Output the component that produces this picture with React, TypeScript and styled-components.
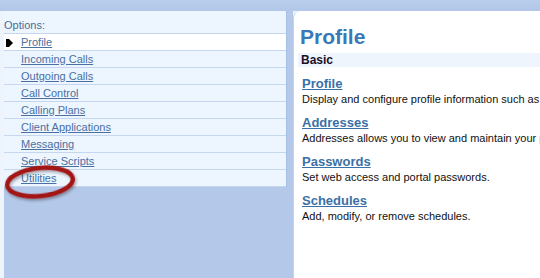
import React from "react";
import styled, { createGlobalStyle } from "styled-components";

const GlobalStyle = createGlobalStyle`
  html, body {
    margin: 0;
    padding: 0;
    background: #eef4fc;
  }
  body {
    font-family: "Liberation Sans", Arial, sans-serif;
  }
`;

//=============LAYOUT===========================
const Page = styled.div`
  position: relative;
  width: 540px;
  height: 278px;
  overflow: hidden;
  background: #eef4fc;
  display: flex;
  flex-direction: column;
`;

const TopBar = styled.div`
  height: 11px;
  flex: none;
  background: linear-gradient(#b9cdec, #b2c7e9);
`;

const Body = styled.div`
  flex: 1;
  display: flex;
  padding-left: 4px;
  min-height: 0;
`;

const Sidebar = styled.div`
  flex: none;
  width: 283px;
  padding-right: 6px;
  background: #b4c8e9;
`;

const MenuPanel = styled.div`
  background: #edf5fe;
  border-right: 1px solid #a8bfe4;
`;

const MenuHeader = styled.div`
  height: 15px;
  padding-top: 7px;
  line-height: 14px;
  font-size: 11px;
  color: #4a6d98;
  border-bottom: 1px solid #c6d6ef;
`;

interface IMenuRow {
  active?: boolean;
}

const MenuRow = styled.div<IMenuRow>`
  height: 16px;
  display: flex;
  align-items: center;
  border-bottom: 1px solid #c6d6ef;
  background: ${({ active }) => (active ? "#ffffff" : "transparent")};
  position: relative;
  white-space: nowrap;
`;

const Bullet = styled.svg`
  position: absolute;
  left: 2px;
  top: 5px;
`;

const MenuLink = styled.a`
  margin-left: 17px;
  font-size: 11px;
  color: #4a70a2;
  text-decoration: underline;
  cursor: pointer;
`;

//=============CONTENT===========================
const Content = styled.div`
  flex: 1;
  min-width: 0;
  overflow: hidden;
  background: #ffffff;
  border-left: 1px solid #c0d2ef;
  border-top-left-radius: 7px;
  padding: 13px 0 0 4px;
`;

const Title = styled.h1`
  margin: 0 0 0 2px;
  font-size: 21px;
  line-height: 26px;
  font-weight: bold;
  color: #3a79b7;
`;

const SectionBar = styled.div`
  margin-top: 3px;
  height: 14px;
  line-height: 14px;
  padding-left: 3px;
  background: #eef5fd;
  font-size: 12px;
  font-weight: bold;
  color: #1c0f2a;
`;

const Item = styled.div`
  padding: 8px 0 0 4px;
`;

const ItemLink = styled.a`
  display: block;
  width: fit-content;
  font-size: 13px;
  line-height: 17px;
  font-weight: bold;
  color: #3b6fa6;
  text-decoration: underline;
  cursor: pointer;
`;

const ItemText = styled.div`
  font-size: 11px;
  line-height: 14px;
  color: #111111;
  white-space: nowrap;
`;

const Annotation = styled.svg`
  position: absolute;
  left: 2px;
  top: 160px;
  pointer-events: none;
`;

const menuItems = [
  "Profile",
  "Incoming Calls",
  "Outgoing Calls",
  "Call Control",
  "Calling Plans",
  "Client Applications",
  "Messaging",
  "Service Scripts",
  "Utilities",
];

const items = [
  {
    title: "Profile",
    text: "Display and configure profile information such as your",
  },
  {
    title: "Addresses",
    text: "Addresses allows you to view and maintain your phone",
  },
  { title: "Passwords", text: "Set web access and portal passwords." },
  { title: "Schedules", text: "Add, modify, or remove schedules." },
];

export default function App() {
  return (
    <>
      <GlobalStyle />
      <Page>
        <TopBar />
        <Body>
          <Sidebar>
            <MenuPanel>
              <MenuHeader>Options:</MenuHeader>
              {menuItems.map((label, i) => (
                <MenuRow key={label} active={i === 0}>
                  {i === 0 && (
                    <Bullet width="7" height="8" viewBox="0 0 7 8">
                      <path d="M0 0 H3 L7 4 L3 8 H0 Z" fill="#000" />
                    </Bullet>
                  )}
                  <MenuLink>{label}</MenuLink>
                </MenuRow>
              ))}
            </MenuPanel>
          </Sidebar>
          <Content>
            <Title>Profile</Title>
            <SectionBar>Basic</SectionBar>
            {items.map((it) => (
              <Item key={it.title}>
                <ItemLink>{it.title}</ItemLink>
                <ItemText>{it.text}</ItemText>
              </Item>
            ))}
          </Content>
        </Body>
        <Annotation width="82" height="46" viewBox="0 0 82 46">
          <defs>
            <filter id="sh" x="-20%" y="-20%" width="140%" height="160%">
              <feDropShadow dx="1" dy="2" stdDeviation="1.5" floodColor="#000" floodOpacity="0.35" />
            </filter>
          </defs>
          <ellipse
            cx="38"
            cy="22"
            rx="33"
            ry="14"
            transform="rotate(-6 38 22)"
            fill="none"
            stroke="#a31313"
            strokeWidth="4.5"
            filter="url(#sh)"
          />
        </Annotation>
      </Page>
    </>
  );
}
